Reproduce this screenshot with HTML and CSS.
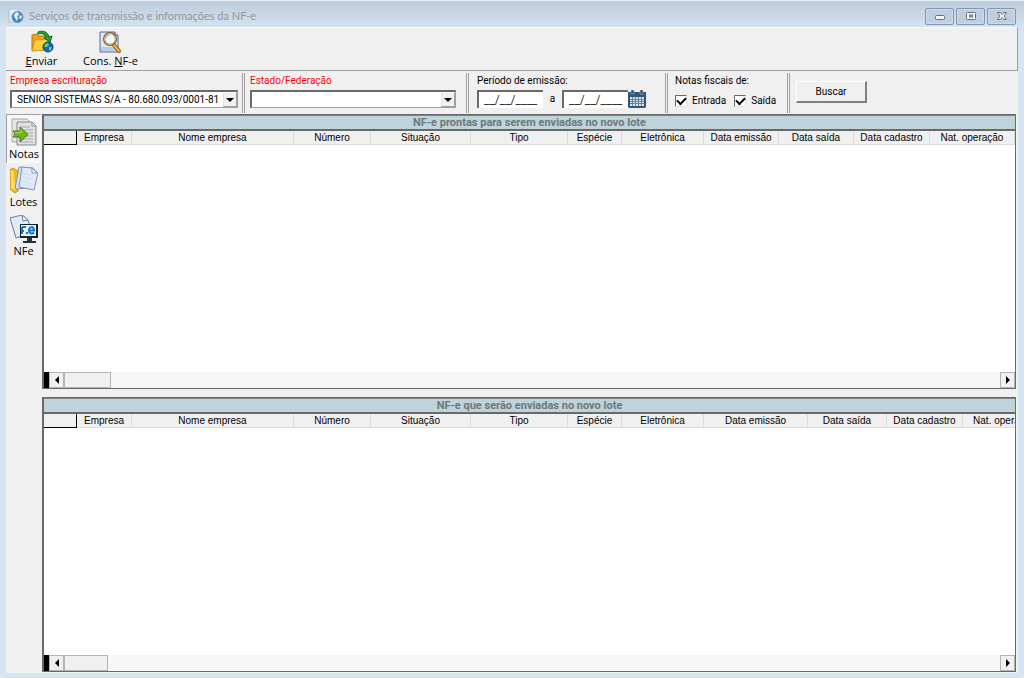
FILE: index.html
```html
<!DOCTYPE html>
<html lang="pt-BR">
<head>
    <meta charset="UTF-8">
    <meta name="viewport" content="width=device-width, initial-scale=1.0">
    <title>Serviços de transmissão e informações da NF-e</title>
    <link rel="stylesheet" href="styles.css">
</head>
<body>
<div class="window">
    <header class="titlebar">
        <svg class="title-icon" width="16" height="16" viewBox="0 0 16 16">
            <path d="M1 1h8l3 3v10H1z" fill="#e4ebf2" stroke="#b3c0ce"/>
            <circle cx="9.500" cy="9" r="5.500" fill="#3f86c6" stroke="#5f94c4"/>
            <path d="M7 5l3-1 1 3-2 1 1 2-1 3-2-3-1-2zM12 7l2 1-1 3-2-1z" fill="#e5f3fb"/>
        </svg>
        <h1>Serviços de transmissão e informações da NF-e</h1>
        <div class="window-buttons">
            <button type="button" aria-label="Minimizar"><svg width="12" height="12" viewBox="0 0 12 12"><rect x="1.500" y="5.500" width="9" height="4" rx="1" fill="#f4f4f4" stroke="#696d7b"/></svg></button>
            <button type="button" aria-label="Maximizar"><svg width="12" height="12" viewBox="0 0 12 12"><rect x="1.500" y="2.500" width="9" height="7" rx="1" fill="#f4f4f4" stroke="#696d7b"/><rect x="4.500" y="5" width="3" height="2" fill="#a9bad0" stroke="#696d7b"/></svg></button>
            <button type="button" aria-label="Fechar"><svg width="12" height="12" viewBox="0 0 12 12"><path d="M1.500 2.500h3L6 4.500l1.500-2h3L8 6l2.500 3.500h-3L6 7.500l-1.500 2h-3L4 6z" fill="#f4f4f4" stroke="#696d7b"/></svg></button>
        </div>
    </header>

    <nav class="toolbar">
        <button type="button" class="tool">
            <svg width="24" height="24" viewBox="0 0 24 24">
                <path d="M2 5l5-1 2 2h9v14H2z" fill="#f1a512" stroke="#bd7a0b"/>
                <path d="M2 21l3-11 16-1-2 11z" fill="#ffce3d" stroke="#d6940f"/>
                <path d="M8 2c5-2 10 0 11 5l3-1-2 6-6-4 2-1c-1-3-4-4-8-3z" fill="#22a13a" stroke="#0d6b24"/>
                <circle cx="18" cy="17" r="5" fill="#1764c0" stroke="#0a3f88"/>
                <path d="M15 14l3-1 1 2-2 2-3 0zM19 17l3 0-1 3-2 1z" fill="#63d063"/>
            </svg>
            <span><u>E</u>nviar</span>
        </button>
        <button type="button" class="tool">
            <svg width="24" height="24" viewBox="0 0 24 24">
                <path d="M2 2h15l3 3v17H2z" fill="#dde8f5" stroke="#536a8b"/>
                <path d="M3 17h16v4H3z" fill="#b8cdea"/>
                <path d="M17 2v3h3" fill="#fff" stroke="#536a8b"/>
                <path d="M15 14l6 7" stroke="#8a5a16" stroke-width="4" stroke-linecap="round"/>
                <path d="M15 14l6 7" stroke="#f2b741" stroke-width="2" stroke-linecap="round"/>
                <circle cx="12" cy="9" r="6" fill="#f2f8fd" stroke="#7d5b2b" stroke-width="2"/>
                <circle cx="12" cy="9" r="5.500" fill="none" stroke="#e5b869"/>
                <path d="M8 9c0-3 2-4 4-4" fill="none" stroke="#a7c8ea" stroke-width="1.500"/>
            </svg>
            <span>Cons. <u>N</u>F-e</span>
        </button>
    </nav>

    <form class="filters">
        <div class="filter filter-company">
            <label class="required" for="empresa">Empresa escrituração</label>
            <div class="combo">
                <select id="empresa"><option>SENIOR SISTEMAS S/A - 80.680.093/0001-81</option></select>
                <span class="combo-arrow"></span>
            </div>
        </div>
        <div class="filter filter-state">
            <label class="required" for="estado">Estado/Federação</label>
            <div class="combo">
                <select id="estado"><option></option></select>
                <span class="combo-arrow"></span>
            </div>
        </div>
        <div class="filter filter-period">
            <label for="data-inicial">Período de emissão:</label>
            <div class="row">
                <input type="text" class="date" id="data-inicial" value="__/__/____">
                <label class="until" for="data-final">a</label>
                <input type="text" class="date" id="data-final" value="__/__/____">
                <button type="button" class="calendar" aria-label="Calendário">
                    <svg width="18" height="18" viewBox="0 0 18 18">
                        <path d="M0 2h18v15l-1 1H1l-1-1z" fill="#2f5878"/>
                        <path d="M3 0h3v4H3zM12 0h3v4h-3z" fill="#2f5878" stroke="#a9bdca" stroke-width=".5"/>
                        <path d="M2 7h14v9H2z" fill="#dbe6ed"/>
                        <path d="M2 9.500h14M2 11.500h14M2 13.500h14M4.500 7v9M7.500 7v9M10.500 7v9M13.500 7v9" stroke="#5f839c"/>
                    </svg>
                </button>
            </div>
        </div>
        <fieldset class="filter filter-type">
            <legend>Notas fiscais de:</legend>
            <div class="row checks">
                <label><input type="checkbox" checked> Entrada</label>
                <label><input type="checkbox" checked> Saída</label>
            </div>
        </fieldset>
        <div class="filter-action">
            <button type="button" class="search">Buscar</button>
        </div>
    </form>

    <div class="content">
        <nav class="sidebar">
            <button type="button" class="side active">
                <svg width="28" height="28" viewBox="0 0 28 28">
                    <path d="M2 1h15l4 4v19H2z" fill="#e4e6e7" stroke="#a2a7aa"/>
                    <path d="M7 4h15l4 4v19H7z" fill="#dfe1e3" stroke="#858b8f"/>
                    <path d="M22 4v4h4z" fill="#fff" stroke="#858b8f"/>
                    <path d="M10 9h10M10 12h13M10 15h13M10 18h13M10 21h13M10 24h13" stroke="#a5a9ac"/>
                    <path d="M3 13h7V9l8 7.500L10 24v-5H3c2-2 2-4 0-6z" fill="#75b51d" stroke="#3f7a0c"/>
                    <path d="M5 14.500h6v-3" fill="none" stroke="#b5e061"/>
                </svg>
                <span>Notas</span>
            </button>
            <button type="button" class="side">
                <svg width="28" height="28" viewBox="0 0 28 28">
                    <path d="M0 4l3-2 5 3v20l-3 2-5-4z" fill="#f3b426" stroke="#cf930f"/>
                    <path d="M1 5l2-1 3 21-5-3z" fill="#ffdc62"/>
                    <path d="M9 1l14 1-4 20-14 1z" fill="#d3e1f3" stroke="#8098b8"/>
                    <path d="M12 1l10 1 6 5-4 17-15-3z" fill="#dfe9f7" stroke="#7c94b8"/>
                    <path d="M22 2v5h5z" fill="#fff" stroke="#8098b8"/>
                    <path d="M13 7l8 2M12 11l9 2M12 15l8 2" stroke="#cfdcef"/>
                </svg>
                <span>Lotes</span>
            </button>
            <button type="button" class="side">
                <svg width="28" height="28" viewBox="0 0 28 28">
                    <path d="M0 3l12-3 6 5 4 13-16 5z" fill="#e1ebf7" stroke="#667f9f"/>
                    <path d="M12 0l1 6 5-1z" fill="#fff" stroke="#667f9f"/>
                    <path d="M10 9h18v14H10z" fill="#17242c"/>
                    <path d="M11 10h15v11H11z" fill="#e8f4fd"/>
                    <path d="M17 23h5v3h4v2H13v-2h4z" fill="#26323a"/>
                    <path d="M12 12v7M12 12h4M12 16h2M16 18h2" stroke="#1673c8" stroke-width="2"/>
                    <path d="M19 15.500h5c0-5-5-4-5 0 0 3 3 4 5 2" fill="none" stroke="#1673c8" stroke-width="2"/>
                </svg>
                <span>NFe</span>
            </button>
        </nav>

        <main class="panels">
            <section class="panel">
                <h2>NF-e prontas para serem enviadas no novo lote</h2>
                <div class="grid">
                    <table class="ready">
                        <colgroup>
                            <col class="c-mark"><col class="c-55"><col class="c-162"><col class="c-77"><col class="c-100"><col class="c-97"><col class="c-54"><col class="c-82"><col class="c-75"><col class="c-75"><col class="c-76"><col>
                        </colgroup>
                        <thead>
                            <tr><th></th><th>Empresa</th><th>Nome empresa</th><th>Número</th><th>Situação</th><th>Tipo</th><th>Espécie</th><th>Eletrônica</th><th>Data emissão</th><th>Data saída</th><th>Data cadastro</th><th>Nat. operação</th></tr>
                        </thead>
                    </table>
                </div>
                <div class="scrollbar">
                    <button type="button" class="arrow left" aria-label="Rolar para a esquerda"></button>
                    <div class="thumb"></div>
                    <button type="button" class="arrow right" aria-label="Rolar para a direita"></button>
                </div>
            </section>
            <section class="panel">
                <h2>NF-e que serão enviadas no novo lote</h2>
                <div class="grid">
                    <table class="queued">
                        <colgroup>
                            <col class="c-mark"><col class="c-55"><col class="c-162"><col class="c-77"><col class="c-100"><col class="c-97"><col class="c-54"><col class="c-82"><col class="c-104"><col class="c-79"><col class="c-76"><col>
                        </colgroup>
                        <thead>
                            <tr><th></th><th>Empresa</th><th>Nome empresa</th><th>Número</th><th>Situação</th><th>Tipo</th><th>Espécie</th><th>Eletrônica</th><th>Data emissão</th><th>Data saída</th><th>Data cadastro</th><th>Nat. operação</th></tr>
                        </thead>
                    </table>
                </div>
                <div class="scrollbar">
                    <button type="button" class="arrow left" aria-label="Rolar para a esquerda"></button>
                    <div class="thumb thumb-short"></div>
                    <button type="button" class="arrow right" aria-label="Rolar para a direita"></button>
                </div>
            </section>
        </main>
    </div>
</div>
</body>
</html>
```

FILE: styles.css
```css
* {
    box-sizing: border-box;
}
body {
    margin: 0;
    background-color: #d6e4f1;
    color: #000;
    font-family: "Liberation Sans", Arial, sans-serif;
    font-size: 10px;
    line-height: 12px;
}
button, input, select {
    font: inherit;
    color: inherit;
    margin: 0;
    padding: 0;
}
svg {
    display: block;
}
.window {
    display: flex;
    flex-direction: column;
    min-height: 100vh;
    padding: 0 6px 5px;
    border-top: 1px solid #e9eff6;
    background: linear-gradient(#bccbda, #d6e4f1 27px);
}

/* Title bar */
.titlebar {
    display: flex;
    align-items: center;
    gap: 5px;
    height: 26px;
    padding: 4px 2px 0;
}
.titlebar h1 {
    flex: 1;
    margin: 0;
    color: #8f969e;
    font-family: Lato, sans-serif;
    font-size: 11px;
    font-weight: normal;
    line-height: 16px;
}
.window-buttons {
    display: flex;
    gap: 2px;
}
.window-buttons button {
    display: flex;
    align-items: center;
    justify-content: center;
    width: 29px;
    height: 17px;
    border: 1px solid #8497b0;
    border-radius: 2px;
    background-color: #bfcfe0;
    box-shadow: inset 0 0 0 1px #cddae8;
}

/* Toolbar */
.toolbar {
    display: flex;
    gap: 20px;
    height: 44px;
    padding: 2px 14px 0;
    background-color: #f0f0f0;
    border-top: 1px solid #fff;
    border-right: 1px solid #a0a0a0;
    border-bottom: 1px solid #a0a0a0;
}
.tool, .side {
    display: flex;
    flex-direction: column;
    align-items: center;
    border: 0;
    background: none;
    font-family: "Open Sans", sans-serif;
    font-size: 11px;
    line-height: 14px;
}
.tool {
    min-width: 43px;
}

/* Filters */
.filters {
    display: flex;
    height: 43px;
    background-color: #f0f0f0;
    font-family: Roboto, sans-serif;
}
.filter {
    min-width: 0;
    margin: 2px 0 1px;
    padding: 2px 4px 0;
    border: 0;
    border-right: 3px double #a0a0a0;
}
.filter > label, legend {
    display: block;
    height: 12px;
    padding: 0;
}
legend {
    float: left;
    width: 100%;
}
.filter-company {
    width: 239px;
}
.filter-state {
    width: 224px;
    padding-right: 10px;
    padding-left: 5px;
}
.filter-period {
    width: 199px;
    padding-left: 8px;
}
.filter-type {
    width: 122px;
    padding-left: 7px;
}
.required {
    color: #f00;
}
.combo {
    display: flex;
    height: 18px;
    margin-top: 3px;
    background-color: #fff;
    border: 1px solid #a0a0a0;
    border-top: 2px solid #696969;
    border-left: 2px solid #696969;
}
.combo select {
    flex: 1;
    min-width: 0;
    padding-left: 5px;
    border: 0;
    appearance: none;
    background: none;
}
.combo-arrow {
    display: flex;
    align-items: center;
    justify-content: center;
    width: 14px;
    background-color: #f0f0f0;
    border: 1px solid #a0a0a0;
    border-top-color: #fff;
    border-left-color: #e3e3e3;
    pointer-events: none;
}
.combo-arrow::after {
    content: "";
    border: 4px solid transparent;
    border-top-color: #000;
    border-bottom: 0;
}
.row {
    display: flex;
    align-items: center;
    height: 18px;
    margin-top: 3px;
}
.date {
    width: 66px;
    height: 18px;
    padding-left: 5px;
    border: 0;
    border-top: 2px solid #696969;
    border-left: 2px solid #696969;
    background-color: #fff;
    color: #333;
    font-size: 12px;
}
.until {
    width: 19px;
    text-align: center;
}
.calendar {
    border: 0;
    background: none;
}
.checks {
    clear: both;
    gap: 8px;
    padding-top: 10px;
}
.checks label {
    display: flex;
    align-items: center;
    gap: 5px;
}
.checks input {
    display: flex;
    align-items: center;
    justify-content: center;
    width: 12px;
    height: 12px;
    appearance: none;
    background-color: #fff;
    border: 1px solid #e3e3e3;
    border-top-color: #696969;
    border-left-color: #696969;
}
.checks input:checked::before {
    content: "";
    width: 7px;
    height: 4px;
    margin-top: -2px;
    border-bottom: 2px solid #000;
    border-left: 2px solid #000;
    transform: rotate(-45deg);
}
.filter-action {
    padding: 10px 6px;
}
.search {
    width: 71px;
    height: 22px;
    background-color: #f0f0f0;
    border: 1px solid #fff;
    border-right: 2px solid #808080;
    border-bottom: 2px solid #808080;
}

/* Side menu and panels */
.content {
    display: flex;
    flex: 1;
    background-color: #f0f0f0;
}
.sidebar {
    width: 36px;
}
.side {
    width: 35px;
    height: 49px;
    padding-top: 3px;
    gap: 1px;
}
.side.active {
    background-color: #f7f7f7;
    border-top: 1px solid #a0a0a0;
    border-left: 1px solid #a0a0a0;
}
.panels {
    display: flex;
    flex: 1;
    flex-direction: column;
    gap: 8px;
    min-width: 0;
    padding: 0 2px 1px 0;
}
.panel {
    display: flex;
    flex: 1;
    flex-direction: column;
    min-height: 0;
    background-color: #fff;
    border: 1px solid #696969;
    border-left-width: 2px;
}
.panel h2 {
    height: 16px;
    margin: 0;
    background-color: #bfd3da;
    border-top: 1px solid #808080;
    border-bottom: 2px solid #696969;
    color: #6f7779;
    font-family: Roboto, sans-serif;
    font-size: 11px;
    font-weight: bold;
    line-height: 13px;
    text-align: center;
}
.grid {
    flex: 1;
    overflow: hidden;
}
table {
    width: 100%;
    table-layout: fixed;
    border-collapse: separate;
    border-spacing: 0;
}
.queued {
    width: calc(100% + 32px);
}
th {
    height: 14px;
    padding: 0;
    background-color: #f0f0f0;
    border-right: 1px solid #dcdcdc;
    border-bottom: 1px solid #dcdcdc;
    font-weight: normal;
    white-space: nowrap;
}
th:first-child {
    border-color: #000;
}
.c-mark {
    width: 33px;
}
.c-54 {
    width: 54px;
}
.c-55 {
    width: 55px;
}
.c-75 {
    width: 75px;
}
.c-76 {
    width: 76px;
}
.c-77 {
    width: 77px;
}
.c-79 {
    width: 79px;
}
.c-82 {
    width: 82px;
}
.c-97 {
    width: 97px;
}
.c-100 {
    width: 100px;
}
.c-104 {
    width: 104px;
}
.c-162 {
    width: 162px;
}
.scrollbar {
    display: flex;
    height: 16px;
    background-color: #f7f7f7;
    border-left: 5px solid #000;
}
.arrow {
    display: flex;
    align-items: center;
    justify-content: center;
    width: 15px;
    background-color: #f0f0f0;
    border: 1px solid #b4b4b4;
}
.arrow::after {
    content: "";
    border: 4px solid transparent;
}
.left::after {
    border-left: 0;
    border-right-color: #000;
}
.right::after {
    border-right: 0;
    border-left-color: #000;
}
.right {
    margin-left: auto;
}
.thumb {
    width: 47px;
    background-color: #f0f0f0;
    border: 1px solid #b4b4b4;
}
.thumb-short {
    width: 44px;
}
```
